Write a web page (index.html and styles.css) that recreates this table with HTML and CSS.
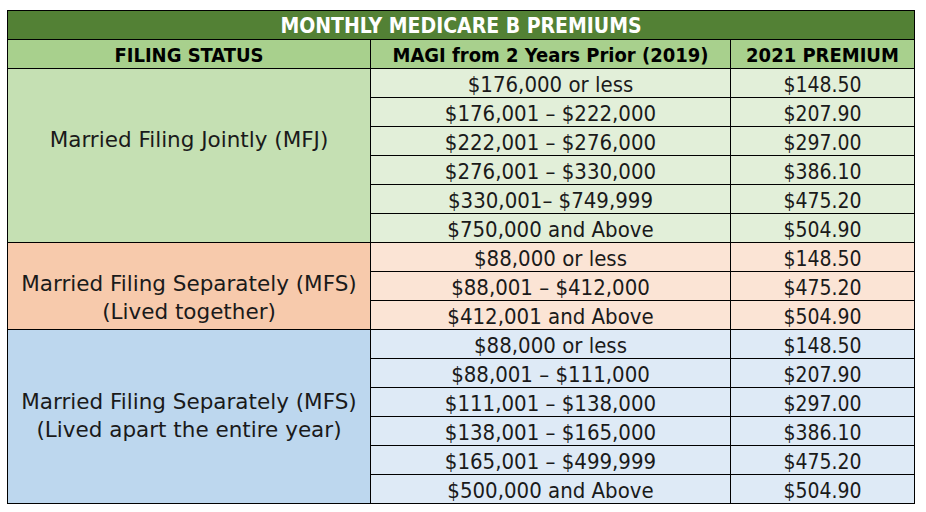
FILE: index.html
```html
<!DOCTYPE html>
<html>
<head>
<meta charset="utf-8">
<link rel="stylesheet" href="styles.css">
</head>
<body>
<table class="prem">
  <colgroup>
    <col class="c1"><col class="c2"><col class="c3">
  </colgroup>
  <tr class="title"><td colspan="3">MONTHLY MEDICARE B PREMIUMS</td></tr>
  <tr class="head"><td>FILING STATUS</td><td>MAGI from 2 Years Prior (2019)</td><td>2021 PREMIUM</td></tr>
  <tr class="g"><td class="st st-mfj" rowspan="6">Married Filing Jointly (MFJ)</td><td>$176,000 or less</td><td class="amt">$148.50</td></tr>
  <tr class="g"><td>$176,001 – $222,000</td><td class="amt">$207.90</td></tr>
  <tr class="g"><td>$222,001 – $276,000</td><td class="amt">$297.00</td></tr>
  <tr class="g"><td>$276,001 – $330,000</td><td class="amt">$386.10</td></tr>
  <tr class="g"><td>$330,001– $749,999</td><td class="amt">$475.20</td></tr>
  <tr class="g"><td>$750,000 and Above</td><td class="amt">$504.90</td></tr>
  <tr class="o"><td class="st st-tog" rowspan="3">Married Filing Separately (MFS)<br>(Lived together)</td><td>$88,000 or less</td><td class="amt">$148.50</td></tr>
  <tr class="o"><td>$88,001 – $412,000</td><td class="amt">$475.20</td></tr>
  <tr class="o"><td>$412,001 and Above</td><td class="amt">$504.90</td></tr>
  <tr class="b"><td class="st st-apart" rowspan="6">Married Filing Separately (MFS)<br>(Lived apart the entire year)</td><td>$88,000 or less</td><td class="amt">$148.50</td></tr>
  <tr class="b"><td>$88,001 – $111,000</td><td class="amt">$207.90</td></tr>
  <tr class="b"><td>$111,001 – $138,000</td><td class="amt">$297.00</td></tr>
  <tr class="b"><td>$138,001 – $165,000</td><td class="amt">$386.10</td></tr>
  <tr class="b"><td>$165,001 – $499,999</td><td class="amt">$475.20</td></tr>
  <tr class="b"><td>$500,000 and Above</td><td class="amt">$504.90</td></tr>
</table>
</body>
</html>
```
FILE: styles.css
```css
html, body {
  margin: 0;
  padding: 0;
  background: #ffffff;
}
body {
  padding: 10px 0 0 7px;
  font-family: "DejaVu Sans", "Liberation Sans", sans-serif;
  color: #1a1a1a;
}
.prem {
  border-collapse: collapse;
  table-layout: fixed;
  width: 908px;
  border: 1px solid #000;
}
.c1 { width: 363px; }
.c2 { width: 360px; }
.c3 { width: 184px; }
.prem td {
  border: 1px solid #000;
  padding: 3px 0 0 0;
  height: 25px;
  text-align: center;
  vertical-align: top;
  font-family: "DejaVu Sans Condensed", "DejaVu Sans", sans-serif;
  font-size: 22px;
  line-height: 25px;
  white-space: nowrap;
}
.prem td.amt {
  font-size: 21px;
  padding-top: 4px;
  height: 24px;
  line-height: 24px;
}
.title td {
  background: #538135;
  color: #ffffff;
  font-weight: bold;
  font-size: 21px;
}
.head td {
  background: #a8d08d;
  color: #000;
  font-weight: bold;
  font-size: 20px;
}
.g td { background: #e2efd9; }
.o td { background: #fbe4d5; }
.b td { background: #deeaf6; }
.prem td.st {
  font-family: "DejaVu Sans", sans-serif;
  font-size: 21.5px;
  line-height: 28px;
  height: auto;
}
.g td.st { background: #c5e0b3; }
.o td.st { background: #f7caac; }
.b td.st { background: #bdd7ee; }
.prem td.st-mfj { padding-top: 57px; }
.prem td.st-tog { padding-top: 27px; }
.prem td.st-apart { padding-top: 58px; }
```
